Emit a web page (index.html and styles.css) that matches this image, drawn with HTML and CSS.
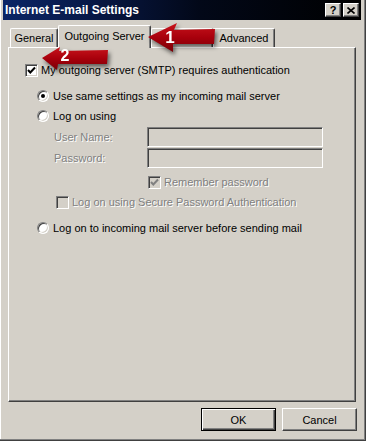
FILE: index.html
```html
<!DOCTYPE html>
<html>
<head>
<meta charset="utf-8">
<link rel="stylesheet" href="styles.css">
</head>
<body>
<div class="window">
  <div class="titlebar">
    <span class="title">Internet E-mail Settings</span>
    <div class="tb-buttons">
      <span class="tb-btn help">?</span>
      <span class="tb-btn close"><svg width="8" height="7" viewBox="0 0 8 7"><path d="M0.5 0.5 L7.5 6.5 M7.5 0.5 L0.5 6.5" stroke="#000" stroke-width="1.6" fill="none"/></svg></span>
    </div>
  </div>
  <div class="tabs">
    <div class="tab t-general">General</div>
    <div class="tab active t-outgoing">Outgoing Server</div>
    <div class="tab t-connection"></div>
    <div class="tab t-advanced">Advanced</div>
  </div>
  <div class="panel">
    <div class="row r-auth">
      <span class="cb"><svg width="9" height="9" viewBox="0 0 9 9"><path d="M1 4 L3.3 6.5 L8 1.5" stroke="#000" stroke-width="2" fill="none"/></svg></span>
      <span class="lbl">My outgoing server (SMTP) requires authentication</span>
    </div>
    <div class="group">
      <div class="row r-same"><span class="radio on"><span class="dot"></span></span><span class="lbl">Use same settings as my incoming mail server</span></div>
      <div class="row r-logon"><span class="radio"></span><span class="lbl">Log on using</span></div>
      <div class="field f-user"><span class="flabel">User Name:</span><span class="input"></span></div>
      <div class="field f-pass"><span class="flabel">Password:</span><span class="input"></span></div>
      <div class="row r-remember">
        <span class="cb disabled"><svg width="9" height="9" viewBox="0 0 9 9"><path d="M1 4 L3.3 6.5 L8 1.5" stroke="#808080" stroke-width="2" fill="none"/></svg></span>
        <span class="lbl dis">Remember password</span>
      </div>
      <div class="row r-spa"><span class="cb disabled"></span><span class="lbl dis">Log on using Secure Password Authentication</span></div>
      <div class="row r-before"><span class="radio"></span><span class="lbl">Log on to incoming mail server before sending mail</span></div>
    </div>
  </div>
  <div class="footer">
    <button class="btn default">OK</button>
    <button class="btn">Cancel</button>
  </div>

  <svg class="arrow arrow1" width="74" height="38" viewBox="0 0 74 38">
    <defs>
      <linearGradient id="ag1" x1="0" y1="0" x2="0" y2="1">
        <stop offset="0" stop-color="#c8141c"/>
        <stop offset="0.5" stop-color="#a8000c"/>
        <stop offset="1" stop-color="#7a0006"/>
      </linearGradient>
    </defs>
    <polygon points="2,16 31,2 28,9 69,8 68,23 27,23 27,31" fill="url(#ag1)"/>
    <text x="24" y="22" class="anum" text-anchor="middle">1</text>
  </svg>
  <svg class="arrow arrow2" width="74" height="32" viewBox="0 0 74 32">
    <defs>
      <linearGradient id="ag2" x1="0" y1="0" x2="0" y2="1">
        <stop offset="0" stop-color="#c8141c"/>
        <stop offset="0.5" stop-color="#a8000c"/>
        <stop offset="1" stop-color="#7a0006"/>
      </linearGradient>
    </defs>
    <polygon points="2,14 20,3 19,7 68,6 67,20 18,20 17,26" fill="url(#ag2)"/>
    <text x="25" y="17" class="anum anum2" text-anchor="middle">2</text>
  </svg>
</div>
</body>
</html>
```

FILE: styles.css
```css
html, body {
  margin: 0;
  padding: 0;
  background: #d4d0c8;
}

.window {
  position: relative;
  width: 366px;
  height: 441px;
  box-sizing: border-box;
  background: #d4d0c8;
  border-right: 1px solid #404040;
  border-bottom: 1px solid #404040;
  box-shadow: inset -1px -1px 0 #808080, inset 1px 0 0 #ffffff;
  padding: 0 3px 0 2px;
  display: flex;
  flex-direction: column;
  font-family: "Liberation Sans", Arial, sans-serif;
  font-size: 11px;
  color: #000;
}

.titlebar {
  height: 20px;
  margin-left: 1px;
  margin-right: 1px;
  display: flex;
  align-items: center;
  justify-content: space-between;
  background: linear-gradient(90deg, #0b2566 0%, #081a4a 22%, #020818 55%, #000 100%);
}

.title {
  color: #fff;
  font-weight: bold;
  font-size: 12px;
  padding-left: 2px;
}

.tb-buttons {
  display: flex;
  gap: 2px;
  padding-right: 2px;
}

.tb-btn {
  width: 16px;
  height: 14px;
  box-sizing: border-box;
  background: #d4d0c8;
  border: 1px solid;
  border-color: #fff #404040 #404040 #fff;
  box-shadow: inset -1px -1px 0 #808080;
  display: flex;
  align-items: center;
  justify-content: center;
  font-weight: bold;
  font-size: 11px;
  line-height: 1;
  color: #000;
}

.tabs {
  display: flex;
  align-items: flex-end;
  margin: 5px 0 0 8px;
  height: 22px;
  position: relative;
  z-index: 2;
}

.tab {
  height: 19px;
  box-sizing: border-box;
  border-top: 1px solid #fff;
  border-left: 1px solid #fff;
  border-right: 1px solid #404040;
  box-shadow: inset -1px 0 0 #808080;
  border-radius: 2px 2px 0 0;
  display: flex;
  align-items: center;
  justify-content: center;
  padding-bottom: 1px;
  background: #d4d0c8;
}

.t-general { width: 48px; }
.t-outgoing { width: 93px; }
.t-connection { width: 62px; }
.t-advanced { width: 62px; }

.tab.active {
  height: 23px;
  margin-bottom: -1px;
  padding-bottom: 3px;
}

.panel {
  margin-left: 6px;
  width: 348px;
  height: 355px;
  box-sizing: border-box;
  border-top: 1px solid #fff;
  border-left: 1px solid #fff;
  border-right: 1px solid #404040;
  border-bottom: 1px solid #404040;
  box-shadow: inset -1px -1px 0 #808080;
  padding-left: 16px;
  position: relative;
  z-index: 1;
}

.row {
  display: flex;
  align-items: center;
  height: 13px;
  white-space: nowrap;
}

.lbl {
  line-height: 13px;
}

.cb {
  width: 13px;
  height: 13px;
  box-sizing: border-box;
  flex: none;
  background: #fff;
  border: 1px solid;
  border-color: #808080 #fff #fff #808080;
  box-shadow: inset 1px 1px 0 #404040, inset -1px -1px 0 #d4d0c8;
  display: flex;
  align-items: center;
  justify-content: center;
  margin-right: 3px;
}

.cb.disabled {
  background: #d4d0c8;
}

.radio {
  width: 12px;
  height: 12px;
  box-sizing: border-box;
  flex: none;
  border-radius: 50%;
  background: #fff;
  border: 1px solid;
  border-color: #808080 #fff #fff #808080;
  box-shadow: inset 1px 1px 0 #404040, inset -1px -1px 0 #d4d0c8;
  display: flex;
  align-items: center;
  justify-content: center;
  margin-right: 4px;
}

.radio .dot {
  width: 4px;
  height: 4px;
  border-radius: 50%;
  background: #000;
}

.r-auth { margin-top: 16px; }

.group { padding-left: 12px; }

.r-same { margin-top: 13px; height: 12px; }
.r-logon { margin-top: 8px; height: 12px; }

.field {
  display: flex;
  align-items: center;
  height: 20px;
  padding-left: 17px;
}
.f-user { margin-top: 5px; }
.f-pass { margin-top: 1px; }

.flabel {
  width: 93px;
  color: #808080;
  text-shadow: 1px 1px 0 #fff;
}

.input {
  width: 176px;
  height: 20px;
  box-sizing: border-box;
  background: #d4d0c8;
  border: 1px solid;
  border-color: #808080 #fff #fff #808080;
  box-shadow: inset 1px 1px 0 #404040, inset -1px -1px 0 #d4d0c8;
}

.dis {
  color: #808080;
  text-shadow: 1px 1px 0 #fff;
}

.r-remember { margin-top: 8px; padding-left: 111px; }
.r-spa { margin-top: 7px; padding-left: 19px; }
.r-before { margin-top: 13px; height: 12px; }

.footer {
  display: flex;
  justify-content: flex-end;
  gap: 6px;
  margin-top: 6px;
  padding-right: 5px;
}

.btn {
  width: 75px;
  height: 23px;
  box-sizing: border-box;
  background: #d4d0c8;
  font-family: "Liberation Sans", Arial, sans-serif;
  font-size: 11px;
  color: #000;
  border: 1px solid;
  border-color: #fff #404040 #404040 #fff;
  box-shadow: inset -1px -1px 0 #808080;
  padding: 0;
  margin: 0;
}

.btn.default {
  border: 1px solid #000;
  box-shadow: inset 1px 1px 0 #fff, inset -1px -1px 0 #404040, inset -2px -2px 0 #808080;
}

.arrow {
  position: absolute;
  z-index: 5;
  filter: drop-shadow(2px 3px 2px rgba(0, 0, 0, 0.55));
}

.arrow1 { left: 146px; top: 21px; }
.arrow2 { left: 40px; top: 44px; }

.anum {
  fill: #fff;
  font-family: "Liberation Sans", Arial, sans-serif;
  font-weight: bold;
  font-size: 17px;
}

.anum2 {
  font-size: 16px;
}
```
